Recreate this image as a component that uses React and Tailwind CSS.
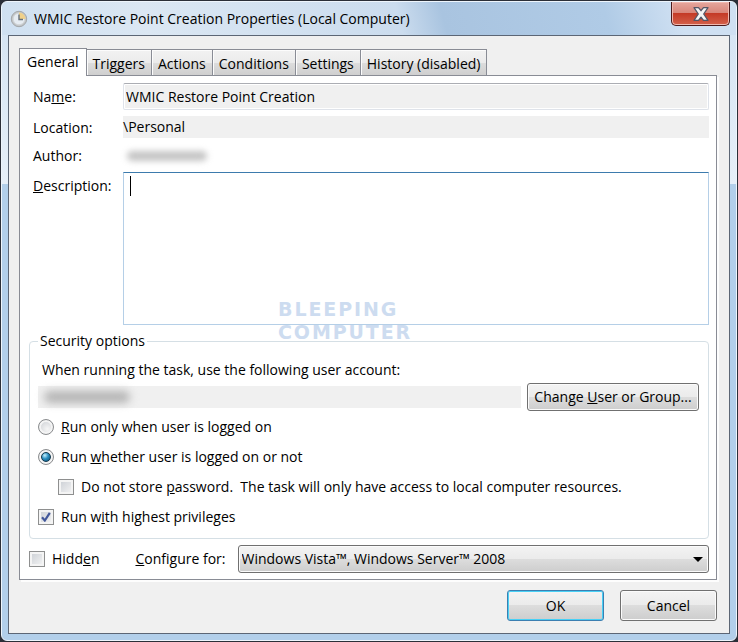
import { useState } from "react";

const TABS = ["General", "Triggers", "Actions", "Conditions", "Settings", "History (disabled)"];

const buttonFace =
  "bg-[linear-gradient(#f3f3f3,#ebebeb_50%,#dddddd_50%,#cdcdcd)] border border-[#707070] rounded-[3px] shadow-[inset_0_0_0_1px_#fbfbfb]";

function ClockIcon() {
  return (
    <svg width="18" height="18" viewBox="0 0 18 18">
      <circle cx="9" cy="9" r="7.700" fill="#c3c6c8" stroke="#a3a7aa" />
      <circle cx="9" cy="9" r="5.800" fill="#e6ecf2" stroke="#d3d7da" />
      <path d="M9 9V2.500a6.500 6.500 0 0 1 6.500 6.500z" fill="#efd08a" />
      <path d="M9 4.500v5h4" fill="none" stroke="#66717c" strokeWidth="1.400" />
    </svg>
  );
}

function CloseIcon() {
  return (
    <svg width="16" height="14" viewBox="0 0 16 14">
      <path
        d="M1 0.700h4.500L8 3.700l2.500-3H15L10.700 7l4.300 6.300h-4.500L8 10.200l-2.500 3.100H1L5.300 7z"
        fill="#f4f4f4"
        stroke="#535666"
        strokeWidth="1.300"
        strokeLinejoin="round"
      />
    </svg>
  );
}

function Radio({ checked, onChange, children }) {
  return (
    <label className="flex items-center gap-[7px]">
      <span className="grid place-items-center">
        <input
          type="radio"
          name="logon"
          checked={checked}
          onChange={onChange}
          className="col-start-1 row-start-1 size-4 appearance-none rounded-full border border-[#8a8c8e] bg-[radial-gradient(circle_at_60%_65%,#f6f6f6,#c4c8cd)] shadow-[inset_0_0_0_2px_#f4f4f4]"
        />
        {checked && (
          <span className="pointer-events-none col-start-1 row-start-1 size-2.5 rounded-full border border-[#12394f] bg-[radial-gradient(circle_at_35%_30%,#c5f1ff,#2b8fc0_45%,#0b4a70)]" />
        )}
      </span>
      <span>{children}</span>
    </label>
  );
}

function Checkbox({ checked, onChange, children }) {
  return (
    <label className="flex items-center gap-[7px]">
      <span className="grid place-items-center">
        <input
          type="checkbox"
          checked={checked}
          onChange={onChange}
          className="col-start-1 row-start-1 size-4 appearance-none border border-[#8e8f8f] bg-[linear-gradient(135deg,#c9cdd3,#f6f6f6)] shadow-[inset_0_0_0_2px_#f4f4f4]"
        />
        {checked && (
          <svg width="10" height="10" viewBox="0 0 10 10" className="pointer-events-none col-start-1 row-start-1">
            <path d="M1 5.200L3.800 8.500L8.800 0.800" fill="none" stroke="#42579a" strokeWidth="2.200" />
          </svg>
        )}
      </span>
      <span>{children}</span>
    </label>
  );
}

function App() {
  const [tab, setTab] = useState("General");
  const [name, setName] = useState("WMIC Restore Point Creation");
  const [description, setDescription] = useState("");
  const [logon, setLogon] = useState("always");
  const [noPassword, setNoPassword] = useState(false);
  const [highest, setHighest] = useState(true);
  const [hidden, setHidden] = useState(false);

  return (
    <div className="min-h-screen bg-[#2b2f38] p-px font-['Open_Sans','Noto_Sans',sans-serif] text-[14px] leading-5 text-black">
      <div className="flex min-h-[calc(100vh-2px)] flex-col rounded-md border border-[#eef5fc] bg-[linear-gradient(#d3e3f3,#e6eff8_182px,#b2cfea_182px,#b2cfea)] px-1.5 pb-1.5">
        <header className="-mx-1.5 flex h-[33px] items-start rounded-t-md bg-[linear-gradient(75deg,#cfe0f1,#dbe7f3_20%,#cbdcee_54%,#a9c4e0_60%,#b0cbe6_82%,#cfe0f2_92%)] pl-2">
          <div className="flex flex-1 items-center gap-1.5 pt-[7px]">
            <ClockIcon />
            <h1>WMIC Restore Point Creation Properties (Local Computer)</h1>
          </div>
          <button
            aria-label="Close"
            className="mr-1.5 flex h-6 w-[59px] items-center justify-center rounded-b-[5px] border border-t-0 border-[#4b1a1c] bg-[linear-gradient(#e5a79e,#d88579_48%,#c43a26_50%,#d4614b)] shadow-[inset_0_0_0_1px_#f0b9b0]"
          >
            <CloseIcon />
          </button>
        </header>

        <main className="flex flex-1 flex-col border border-[#5c6675] bg-[#f0f0f0] pt-3 pr-3 pb-3 pl-2.5">
          <nav className="flex items-end">
            {TABS.map((t) => (
              <button
                key={t}
                onClick={() => setTab(t)}
                className={
                  t === tab
                    ? "relative z-10 -mb-px h-[28px] border border-b-0 border-[#898c95] bg-white px-[7px] pb-0.5"
                    : "h-[26px] border border-b-0 border-l-0 border-[#898c95] bg-[linear-gradient(#f2f2f2,#ebebeb_50%,#dddddd_50%,#cfcfcf)] px-1.5 pt-0.5 shadow-[inset_1px_1px_0_#fcfcfc]"
                }
              >
                {t}
              </button>
            ))}
          </nav>

          <section className="flex flex-1 flex-col border border-[#898c95] bg-white pt-[7px] pr-[7px] pb-1 pl-[9px] shadow-[2px_2px_0_#fdfdfd]">
            <div className="grid grid-cols-[90px_1fr] pl-1">
              <label htmlFor="name" className="pt-1">
                Na<u>m</u>e:
              </label>
              <input
                id="name"
                value={name}
                onChange={(e) => setName(e.target.value)}
                className="h-[27px] rounded-xs border border-[#dfe3ea] border-t-[#abadb3] bg-[#f0f0f0] px-0.5 shadow-[inset_0_0_0_1px_#fff]"
              />
              <span className="mt-1.5 flex items-end">Location:</span>
              <span className="mt-1.5 flex h-[22px] items-center bg-[#f0f0f0]">\Personal</span>
              <span className="mt-2">Author:</span>
              <span className="mt-2 flex items-center pl-1">
                <span className="h-2.5 w-20 rounded-full bg-[#c4c4c4] blur-[3px]" />
              </span>
              <label htmlFor="description" className="mt-1.5 pt-1">
                <u>D</u>escription:
              </label>
              <div className="relative mt-1.5 flex">
                <textarea
                  id="description"
                  value={description}
                  onChange={(e) => setDescription(e.target.value)}
                  className="h-[153px] flex-1 resize-none border border-[#b5cfe7] border-t-[#3d7bad] px-1.5 py-0.5 outline-none"
                />
                <span className="pointer-events-none absolute top-1 left-[7px] h-5 w-px bg-black" />
                <div className="pointer-events-none absolute top-[126px] left-[155px] font-['DejaVu_Sans',sans-serif] text-[19px] leading-[23px] font-bold tracking-widest text-[#cddcf0]">
                  <div>BLEEPING</div>
                  <div>COMPUTER</div>
                </div>
              </div>
            </div>

            <fieldset className="mt-1.5 flex flex-col rounded-[4px] border border-[#d5dfe5] pr-[9px] pb-[11px] pl-2">
              <legend className="px-0.5">Security options</legend>
              <p className="mt-[9px] pl-1">When running the task, use the following user account:</p>
              <div className="mt-[3px] flex items-center gap-1.5">
                <span className="flex h-[22px] flex-1 items-center bg-[#f0f0f0] pl-1.5">
                  <span className="h-3 w-[86px] rounded-full bg-[#b4b4b4] blur-[4px]" />
                </span>
                <button className={`${buttonFace} h-7 w-[172px]`}>
                  Change <u>U</u>ser or Group...
                </button>
              </div>
              <div className="mt-1.5 flex flex-col gap-2.5">
                <Radio checked={logon === "user"} onChange={() => setLogon("user")}>
                  <u>R</u>un only when user is logged on
                </Radio>
                <Radio checked={logon === "always"} onChange={() => setLogon("always")}>
                  Run <u>w</u>hether user is logged on or not
                </Radio>
                <div className="pl-5">
                  <Checkbox checked={noPassword} onChange={(e) => setNoPassword(e.target.checked)}>
                    Do not store <u>p</u>assword.&nbsp; The task will only have access to local computer resources.
                  </Checkbox>
                </div>
                <Checkbox checked={highest} onChange={(e) => setHighest(e.target.checked)}>
                  Run w<u>i</u>th highest privileges
                </Checkbox>
              </div>
            </fieldset>

            <div className="mt-1.5 flex items-center">
              <Checkbox checked={hidden} onChange={(e) => setHidden(e.target.checked)}>
                Hidd<u>e</u>n
              </Checkbox>
              <label htmlFor="configure" className="ml-9">
                <u>C</u>onfigure for:
              </label>
              <div className="relative ml-3 flex flex-1">
                <select id="configure" className={`${buttonFace} h-7 flex-1 appearance-none px-[3px]`}>
                  <option>Windows Vista™, Windows Server™ 2008</option>
                </select>
                <svg width="10" height="5" viewBox="0 0 10 5" className="pointer-events-none absolute top-3 right-1.5">
                  <path d="M0 0h10L5 5z" fill="#000" />
                </svg>
              </div>
            </div>
          </section>

          <footer className="mt-2.5 flex justify-end gap-4">
            <button className="h-[31px] w-[97px] rounded-[3px] border border-[#3c7fb1] bg-[linear-gradient(#f3f3f3,#ebebeb_50%,#dddddd_50%,#cdcdcd)] shadow-[inset_0_0_0_1px_#48d0f5]">
              OK
            </button>
            <button className={`${buttonFace} h-[31px] w-[97px]`}>Cancel</button>
          </footer>
        </main>
      </div>
    </div>
  );
}

export default App;
